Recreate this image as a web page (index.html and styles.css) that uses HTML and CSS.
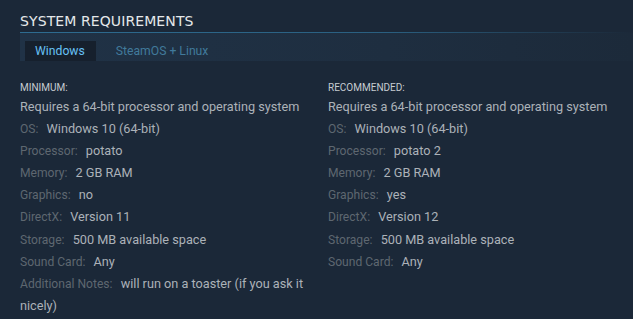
FILE: index.html
```html
<!DOCTYPE html>
<html lang="en">
<head>
    <meta charset="UTF-8">
    <meta name="viewport" content="width=device-width, initial-scale=1.0">
    <title>System Requirements</title>
    <link rel="stylesheet" href="styles.css">
</head>
<body>
    <div class="sysreq">
        <h2>System Requirements</h2>

        <div class="sysreq-tabs">
            <div class="tab active">Windows</div>
            <div class="tab">SteamOS + Linux</div>
        </div>

        <div class="sysreq-contents">
            <div class="col">
                <ul>
                    <li class="title">Minimum:</li>
                    <li>Requires a 64-bit processor and operating system</li>
                    <li><span class="label">OS:</span> Windows 10 (64-bit)</li>
                    <li><span class="label">Processor:</span> potato</li>
                    <li><span class="label">Memory:</span> 2 GB RAM</li>
                    <li><span class="label">Graphics:</span> no</li>
                    <li><span class="label">DirectX:</span> Version 11</li>
                    <li><span class="label">Storage:</span> 500 MB available space</li>
                    <li><span class="label">Sound Card:</span> Any</li>
                    <li><span class="label">Additional Notes:</span> will run on a toaster (if you ask it nicely)</li>
                </ul>
            </div>
            <div class="col">
                <ul>
                    <li class="title">Recommended:</li>
                    <li>Requires a 64-bit processor and operating system</li>
                    <li><span class="label">OS:</span> Windows 10 (64-bit)</li>
                    <li><span class="label">Processor:</span> potato 2</li>
                    <li><span class="label">Memory:</span> 2 GB RAM</li>
                    <li><span class="label">Graphics:</span> yes</li>
                    <li><span class="label">DirectX:</span> Version 12</li>
                    <li><span class="label">Storage:</span> 500 MB available space</li>
                    <li><span class="label">Sound Card:</span> Any</li>
                </ul>
            </div>
        </div>
    </div>
</body>
</html>
```

FILE: styles.css
```css
body {
    margin: 0;
    background-color: #1b2838;
    font-family: Roboto, "Liberation Sans", Arial, sans-serif;
}

.sysreq {
    padding: 12px 0 0 20px;
}

h2 {
    margin: 0;
    padding-bottom: 2px;
    font-family: "DejaVu Sans", sans-serif;
    font-size: 14px;
    font-weight: normal;
    letter-spacing: 0.1px;
    text-transform: uppercase;
    color: #e5e8ea;
    line-height: 18px;
    border-bottom: 1px solid;
    border-image: linear-gradient(to right, #2e6c91 0%, #2a5f80 60%, rgba(43, 95, 128, 0) 100%) 1;
}

.sysreq-tabs {
    display: flex;
    gap: 10px;
    padding: 8px 0 0 5px;
    height: 20px;
    background: linear-gradient(to right, #203246 0%, #1e2e40 60%, #1c2a3a 100%);
}

.tab {
    padding: 0 10px;
    font-size: 12.2px;
    line-height: 20px;
    color: #417a9b;
}

.tab.active {
    padding-right: 11px;
    background-color: #16202d;
    color: #67c1f5;
}

.sysreq-contents {
    display: grid;
    grid-template-columns: 296px 1fr;
    column-gap: 12px;
    padding-top: 20px;
}

ul {
    list-style: none;
    margin: 0;
    padding: 0;
}

li {
    font-size: 12.7px;
    line-height: 22.1px;
    color: #acb2b8;
}

li.title {
    font-size: 10px;
    line-height: 14px;
    margin-bottom: 1px;
    text-transform: uppercase;
    color: #c6ccd1;
}

.label {
    font-size: 12.1px;
    color: #5e6770;
    margin-right: 5px;
}
```
